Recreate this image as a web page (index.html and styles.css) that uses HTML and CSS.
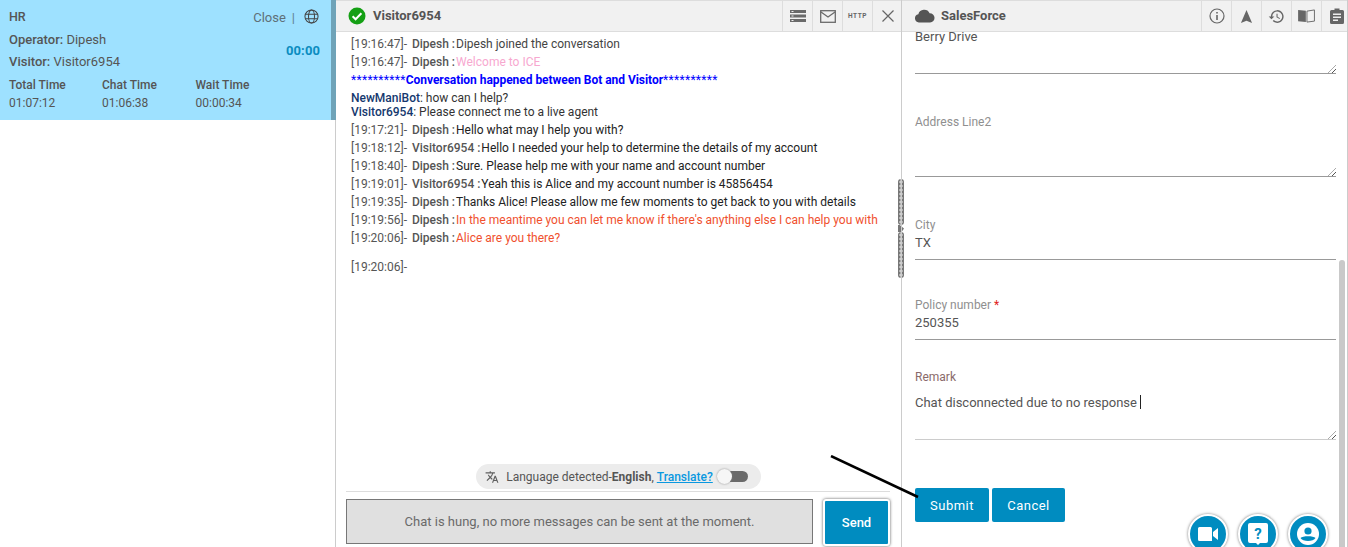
FILE: index.html
```html
<!DOCTYPE html>
<html lang="en">
<head>
<meta charset="utf-8">
<title>Agent chat console</title>
<link rel="stylesheet" href="styles.css">
</head>
<body>
<div class="app">
  <aside class="queue">
    <div class="card">
      <div class="card-main">
        <div class="card-top"><b class="dept">HR</b><span class="close-link">Close</span><span class="sep">|</span>
          <svg class="globe" viewBox="0 0 16 16"><circle cx="8" cy="8" r="7"/><ellipse cx="8" cy="8" rx="3.200" ry="7"/><path d="M1.400 5.600h13.200M1.400 10.400h13.200"/></svg>
        </div>
        <div class="card-line op"><b>Operator:</b> Dipesh</div>
        <div class="card-line vis"><b>Visitor:</b> Visitor6954</div>
        <div class="timer">00:00</div>
        <div class="times">
          <div><b>Total Time</b><span>01:07:12</span></div>
          <div><b>Chat Time</b><span>01:06:38</span></div>
          <div><b>Wait Time</b><span>00:00:34</span></div>
        </div>
      </div>
    </div>
  </aside>

  <main class="chat">
    <header class="bar">
      <svg class="check" viewBox="0 0 18 18"><circle cx="9" cy="9" r="8.500" fill="#14a014"/><path d="M4.600 9.300l3 3 5.800-6" fill="none" stroke="#fff" stroke-width="2"/></svg>
      <h2 class="bar-title">Visitor6954</h2>
      <div class="tools">
        <div class="tool"><svg viewBox="0 0 16 14" width="16" height="14"><path fill="#6a6a6a" d="M0 1h16v3H0zM0 5.500h16v3H0zM0 10h16v3H0z"/><path fill="#eee" d="M1.500 2h2v1h-2zM1.500 6.500h2v1h-2zM1.500 11h2v1h-2z"/></svg></div>
        <div class="tool"><svg viewBox="0 0 16 13" width="16" height="13"><rect x=".7" y=".7" width="14.600" height="11.600" fill="none" stroke="#6a6a6a" stroke-width="1.300"/><path d="M1 2l7 5 7-5" fill="none" stroke="#6a6a6a" stroke-width="1.300"/></svg></div>
        <div class="tool http">HTTP</div>
        <div class="tool"><svg viewBox="0 0 12 12" width="12" height="12"><path d="M.5.500l11 11M11.500.5l-11 11" stroke="#666" stroke-width="1.200"/></svg></div>
      </div>
    </header>

    <div class="log">
      <p class="row"><i>[19:16:47]-</i><b>Dipesh :</b>Dipesh joined the conversation</p>
      <p class="row"><i>[19:16:47]-</i><b>Dipesh :</b><span class="pink">Welcome to ICE</span></p>
      <p class="row bot-head">**********<b>Conversation happened between Bot and Visitor</b>**********</p>
      <p class="pair"><b>NewManiBot</b>: how can I help?</p>
      <p class="pair"><b>Visitor6954</b>: Please connect me to a live agent</p>
      <p class="row"><i>[19:17:21]-</i><b>Dipesh :</b><span class="blk">Hello what may I help you with?</span></p>
      <p class="row"><i>[19:18:12]-</i><b>Visitor6954 :</b><span class="blk">Hello I needed your help to determine the details of my account</span></p>
      <p class="row"><i>[19:18:40]-</i><b>Dipesh :</b><span class="blk">Sure. Please help me with your name and account number</span></p>
      <p class="row"><i>[19:19:01]-</i><b>Visitor6954 :</b><span class="blk">Yeah this is Alice and my account number is 45856454</span></p>
      <p class="row"><i>[19:19:35]-</i><b>Dipesh :</b><span class="blk">Thanks Alice! Please allow me few moments to get back to you with details</span></p>
      <p class="row"><i>[19:19:56]-</i><b>Dipesh :</b><span class="red">In the meantime you can let me know if there's anything else I can help you with</span></p>
      <p class="row"><i>[19:20:06]-</i><b>Dipesh :</b><span class="red">Alice are you there?</span></p>
      <p class="row last"><i>[19:20:06]-</i></p>
    </div>

    <div class="lang-wrap">
      <div class="lang">
        <svg class="tr-ico" viewBox="0 0 24 24" width="14" height="14"><path fill="#5f5f5f" d="M12.870 15.070l-2.540-2.510.03-.03A17.500 17.500 0 0 0 14.070 6H17V4h-7V2H8v2H1v2h11.170A15.700 15.700 0 0 1 9 11.350 15.600 15.600 0 0 1 6.690 8h-2c.73 1.630 1.730 3.170 2.980 4.560l-5.090 5.020L4 19l5-5 3.110 3.110zM18.500 10h-2L12 22h2l1.120-3h4.750L21 22h2zm-2.620 7l1.620-4.330L19.120 17z"/></svg>
        <span>Language detected-<b>English</b>, <a class="tr-link" href="#">Translate?</a></span>
        <span class="toggle"><span class="knob"></span></span>
      </div>
    </div>

    <footer class="composer">
      <div class="hung">Chat is hung, no more messages can be sent at the moment.</div>
      <button class="send" type="button">Send</button>
    </footer>

    <div class="splitter"><span class="grip"></span><span class="notch"></span><span class="grip"></span></div>
  </main>

  <section class="crm">
    <header class="bar">
      <svg class="cloud" viewBox="0 0 22 15" width="21" height="14"><path fill="#555" d="M5 14.500a4.500 4.500 0 0 1-.6-8.900A6.500 6.500 0 0 1 16.500 4.500 5 5 0 0 1 17 14.500z"/></svg>
      <h2 class="bar-title">SalesForce</h2>
      <div class="tools">
        <div class="tool"><svg viewBox="0 0 16 16" width="16" height="16"><circle cx="8" cy="8" r="7" fill="none" stroke="#666" stroke-width="1.200"/><path fill="#666" d="M7.200 4h1.600v1.600H7.200zM7.200 7h1.600v5H7.200z"/></svg></div>
        <div class="tool"><svg viewBox="0 0 14 16" width="13" height="15"><path fill="#666" d="M7 1l6 14-6-2.500L1 15z"/></svg></div>
        <div class="tool"><svg viewBox="0 0 24 24" width="17" height="17"><path fill="#666" d="M13 3a9 9 0 0 0-9 9H1l3.900 3.900L9 12H6a7 7 0 1 1 2.100 5l-1.400 1.400A9 9 0 1 0 13 3zm-1 5v5l4.300 2.500.7-1.200-3.500-2.100V8z"/></svg></div>
        <div class="tool"><svg viewBox="0 0 18 15" width="17" height="14"><path fill="#666" d="M0 1l8.300 1v12L0 13z"/><path fill="none" stroke="#666" d="M9.500 2.300l8-1.300v12l-8 1z"/></svg></div>
        <div class="tool"><svg viewBox="0 0 14 16" width="14" height="16"><path fill="#666" d="M1.500 2H4.500V.500h5V2h3A1.500 1.500 0 0 1 14 3.500v11a1.500 1.500 0 0 1-1.500 1.500h-11A1.500 1.500 0 0 1 0 14.500v-11A1.500 1.500 0 0 1 1.500 2z"/><path fill="#eee" d="M3 5.500h8V7H3zM3 8.500h8V10H3zM3 11.500h5V13H3z"/></svg></div>
      </div>
    </header>
    <div class="form">
      <div class="field f-berry"><div class="value">Berry Drive</div></div>
      <div class="field f-addr"><label class="lab">Address Line2</label></div>
      <div class="field f-city"><label class="lab">City</label><div class="value">TX</div></div>
      <div class="field f-policy"><label class="lab">Policy number <em>*</em></label><div class="value">250355</div></div>
      <div class="field f-remark"><label class="lab brown">Remark</label><div class="value">Chat disconnected due to no response <span class="caret"></span></div></div>
      <div class="actions"><button class="act" type="button">Submit</button><button class="act" type="button">Cancel</button></div>
    </div>
    <div class="fabs">
      <span class="fab"><svg viewBox="0 0 20 14" width="20" height="14"><path fill="#fff" d="M0 1.500A1.500 1.500 0 0 1 1.500 0h11A1.500 1.500 0 0 1 14 1.500V14H1.500A1.500 1.500 0 0 1 0 12.500zM15 5l5-4v12l-5-4z"/></svg></span>
      <span class="fab"><svg viewBox="0 0 20 22" width="20" height="22"><path fill="#fff" fill-rule="evenodd" d="M2 0h16a2 2 0 0 1 2 2v16a2 2 0 0 1-2 2h-6l-2 2-2-2H2a2 2 0 0 1-2-2V2a2 2 0 0 1 2-2z"/><text x="10" y="15.500" text-anchor="middle" class="q">?</text></svg></span>
      <span class="fab"><svg viewBox="0 0 22 22" width="22" height="22"><circle cx="11" cy="11" r="11" fill="#fff"/><circle cx="11" cy="8" r="3.600" fill="#008cc0"/><path fill="#008cc0" d="M3.500 15c2-2.500 13-2.500 15 0-2 4-13 4-15 0z"/></svg></span>
    </div>
    <div class="scrollbar"></div>
  </section>
</div>
<svg class="arrow" viewBox="0 0 100 50" width="100" height="50"><path d="M1 1L88 42" stroke="#000" stroke-width="2.500" fill="none"/></svg>
</body>
</html>
```
FILE: styles.css
```css
* { box-sizing: border-box; }
html, body { margin: 0; height: 547px; overflow: hidden; background: #fff; }
body { font: 12px/18px Roboto, "Liberation Sans", sans-serif; color: #555; position: relative; }
p, h2 { margin: 0; }
.app { display: grid; grid-template-columns: 336px 565px 447px; height: 547px; }

.queue { border-right: 1px solid #ccc; }
.card { height: 120px; background: #9ee1ff; border-right: 5px solid #6fa3b8; margin-right: -1px; padding: 7px 9px; }
.card-main { position: relative; }
.card-top { display: flex; align-items: center; height: 20px; font-size: 13px; }
.dept { flex: 1; font-weight: 500; font-size: 12.500px; }
.close-link { color: #5f6f78; padding-top: 1px; }
.sep { margin: 0 7px 0 6px; color: #5f7f90; padding-top: 1px; }
.globe { width: 15px; height: 15px; fill: none; stroke: #444; stroke-width: 1.100; margin: -2px 3px 0 2px; }
.card-line { font-size: 13px; height: 22px; line-height: 22px; }
.card-line b { font-weight: 500; }
.op { margin-top: 2px; }
.timer { position: absolute; right: 2px; top: 35px; font-size: 13px; font-weight: 700; color: #0a8cc0; letter-spacing: .1px; }
.times { display: grid; grid-template-columns: 93px 93.500px 93px; margin-top: 3px; }
.times b { display: block; font-weight: 500; font-size: 12px; line-height: 18px; }
.times span { display: block; font-size: 12px; line-height: 18px; }

.chat { position: relative; display: flex; flex-direction: column; height: 547px; }
.bar { display: flex; align-items: center; height: 32px; background: #f1f1f1; border-top: 1px solid #ddd; border-bottom: 1px solid #ddd; padding-left: 12px; }
.bar-title { flex: 1; font-size: 13px; font-weight: 700; color: #555; }
.check { width: 18px; height: 18px; margin-right: 7px; }
.tools { display: flex; height: 30px; margin-right: -1px; }
.crm .tools { margin-right: -4px; }
.tool { width: 30px; height: 30px; border-left: 1px solid #ddd; display: flex; align-items: center; justify-content: center; }
.http { font-size: 6.500px; font-weight: 700; letter-spacing: .5px; color: #666; }

.log { flex: 1; padding: 3px 15px 0; font-size: 12px; color: #444; }
.row { height: 18px; line-height: 18px; white-space: nowrap; }
.row i { font-style: normal; color: #555; margin-right: 5px; }
.row b { font-weight: 500; color: #555; margin-right: 1px; }
.pink { color: #f7a8cf; }
.blk { color: #222; }
.red { color: #f0502e; }
.bot-head { color: #0000ff; margin-bottom: 2px; letter-spacing: .3px; }
.bot-head b { font-weight: 700; color: #0000ff; letter-spacing: -.04px; margin-right: 0; }
.pair { height: 14px; line-height: 14px; margin-top: 1px; color: #333; }
.pair + .pair { margin-top: 0; margin-bottom: 2px; }
.pair b { font-weight: 500; color: #14386e; }
.last { margin-top: 11px; }

.lang-wrap { display: flex; justify-content: center; height: 27px; }
.lang { display: flex; align-items: center; height: 25px; padding: 0 13px 0 9px; border-radius: 13px; background: #ececec; color: #555; font-size: 12px; }
.lang b { font-weight: 700; }
.tr-ico { margin-right: 7px; }
.tr-link { color: #0a98e0; font-weight: 500; }
.toggle { position: relative; width: 30px; height: 11px; margin-left: 5px; background: #6a6a6a; border-radius: 6px; }
.knob { position: absolute; left: -1px; top: -2px; width: 15px; height: 15px; background: #f6f6f6; border-radius: 50%; box-shadow: 0 0 2px #888; }

.composer { display: flex; align-items: flex-start; gap: 10px; height: 56px; margin: 0 11px 0 10px; border-top: 1px solid #ddd; padding-top: 7px; }
.hung { flex: 1; height: 45px; display: flex; align-items: center; justify-content: center; background: #e0e0e0; border: 1px solid #777; font-size: 13px; color: #6a6a6a; }
.send { width: 67px; height: 47px; background: #008cc0; color: #fff; border: 2px solid #fff; border-radius: 3px; box-shadow: 0 0 3px #555; font: 500 13px Roboto, sans-serif; }

.splitter { position: absolute; right: -3px; top: 179px; width: 6px; display: flex; flex-direction: column; align-items: center; }
.grip { width: 6px; height: 46px; border-radius: 3px; background: radial-gradient(circle, #d0d0d0 1.400px, transparent 1.900px) 0 1px / 6px 4px, #777; }
.notch { height: 7px; width: 6px; background: #777; clip-path: polygon(0 0, 30% 0, 100% 50%, 60% 100%, 0 100%); }

.crm { position: relative; border-left: 1px solid #ccc; border-right: 1px solid #ccc; height: 547px; overflow: hidden; }
.cloud { margin-right: 6px; }
.form { padding: 0 11px 0 13px; height: 515px; font-size: 13px; }
.field { position: relative; border-bottom: 1px solid #999; }
.lab { display: block; font-size: 12px; color: #8f8f8f; line-height: 18px; }
.lab em { font-style: normal; color: #e02020; }
.brown { color: #8a6a6a; }
.value { color: #555; line-height: 18px; font-size: 13px; }
.f-berry { height: 46px; margin-top: -4px; }
.f-berry .value { margin-top: 0; }
.f-addr { height: 64px; margin-top: 39px; }
.f-city { height: 44px; margin-top: 39px; }
.f-policy { height: 44px; margin-top: 36px; }
.f-remark { height: 72px; margin-top: 28px; border-bottom-color: #ccc; }
.f-remark .value { margin-top: 8px; }
.f-berry::after, .f-addr::after, .f-remark::after { content: ""; position: absolute; right: 0; bottom: 0; width: 8px; height: 8px; background: repeating-linear-gradient(135deg, transparent 0 2px, #555 2px 3px); clip-path: polygon(100% 0, 100% 100%, 0 100%); }
.caret { display: inline-block; width: 1px; height: 14px; background: #222; vertical-align: -2px; }
.actions { display: flex; gap: 3px; margin-top: 48px; }
.act { height: 34px; width: 74px; background: #008cc0; color: #fff; border: 0; border-radius: 2px; font: 400 13px Roboto, sans-serif; letter-spacing: .5px; }
.act + .act { width: 73px; }

.fabs { position: absolute; left: 286px; top: 514px; display: flex; gap: 10px; }
.fab { width: 40px; height: 40px; border-radius: 50%; background: #008cc0; border: 2px solid #fff; box-shadow: 0 0 3px #777; display: flex; align-items: center; justify-content: center; }
.q { font: 700 15px Roboto, sans-serif; fill: #008cc0; }
.scrollbar { position: absolute; right: 2px; top: 260px; bottom: 0; width: 6px; background: #c9c9c9; border-radius: 3px 3px 0 0; }
.arrow { position: absolute; left: 830px; top: 455px; }
```
